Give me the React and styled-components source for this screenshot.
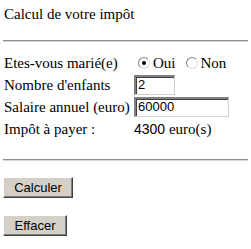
import React from "react"
import styled, { createGlobalStyle } from "styled-components"

const GlobalStyle = createGlobalStyle`
  body {
    margin: 0;
    background: #ffffff;
    font-family: "Liberation Serif", "Times New Roman", serif;
    color: #000000;
  }
`

const Page = styled.div`
  padding: 0 3px;
`

const Title = styled.div`
  margin-top: 5px;
  padding-left: 1px;
  font-size: 15px;
  line-height: 18px;
`

const Rule = styled.div`
  height: 0;
  border-top: 1px solid #8c8c8c;
  border-bottom: 1px solid #d8d8d8;
  margin-top: ${(p) => p.$top}px;
`

const Form = styled.div`
  display: grid;
  grid-template-columns: 130px auto;
  grid-auto-rows: 22px;
  align-items: center;
  margin-top: 10px;
  padding-left: 1px;
  font-size: 15px;
`

const Label = styled.div`
  white-space: nowrap;
`

const Choices = styled.div`
  display: flex;
  align-items: center;
  padding-left: 4px;
`

const Choice = styled.label`
  display: flex;
  align-items: center;
  margin-right: 10px;
`

const Radio = styled.span`
  width: 12px;
  height: 12px;
  box-sizing: border-box;
  border-radius: 50%;
  border: 1px solid #808080;
  border-right-color: #dcdcdc;
  border-bottom-color: #dcdcdc;
  background: #ffffff;
  margin-right: 3px;
  display: flex;
  align-items: center;
  justify-content: center;

  &::after {
    content: "";
    width: 4px;
    height: 4px;
    border-radius: 50%;
    background: ${(p) => (p.$checked ? "#000000" : "transparent")};
  }
`

const Field = styled.div`
  width: ${(p) => p.$width}px;
  height: 20px;
  box-sizing: border-box;
  border: 2px solid #808080;
  border-right: 1px solid #d4d0c8;
  border-bottom: 1px solid #d4d0c8;
  box-shadow: inset 1px 1px 0 #404040;
  background: #ffffff;
  font-family: "Liberation Sans", Arial, sans-serif;
  font-size: 13px;
  line-height: 16px;
  padding-left: 2px;
`

const Result = styled.div`
  white-space: nowrap;
`

const Amount = styled.span`
  font-family: "Liberation Sans", Arial, sans-serif;
  font-size: 14px;
`

const Button = styled.div`
  width: ${(p) => p.$width}px;
  height: 21px;
  box-sizing: border-box;
  margin-top: ${(p) => p.$top}px;
  background: #d4d0c8;
  border: 1px solid #ffffff;
  border-right-color: #404040;
  border-bottom-color: #404040;
  box-shadow: inset -1px -1px 0 #808080;
  font-family: "Liberation Sans", Arial, sans-serif;
  font-size: 13px;
  display: flex;
  align-items: center;
  justify-content: center;
`

export default function App() {
  return (
    <Page>
      <GlobalStyle />
      <Title>Calcul de votre impôt</Title>
      <Rule $top={17} />
      <Form>
        <Label>Etes-vous marié(e)</Label>
        <Choices>
          <Choice>
            <Radio $checked />
            Oui
          </Choice>
          <Choice>
            <Radio />
            Non
          </Choice>
        </Choices>
        <Label>Nombre d'enfants</Label>
        <Field $width={41}>2</Field>
        <Label>Salaire annuel (euro)</Label>
        <Field $width={95}>60000</Field>
        <Label>Impôt à payer :</Label>
        <Result>
          <Amount>4300</Amount> euro(s)
        </Result>
      </Form>
      <Rule $top={19} />
      <Button $top={16} $width={70}>Calculer</Button>
      <Button $top={17} $width={64}>Effacer</Button>
    </Page>
  )
}
